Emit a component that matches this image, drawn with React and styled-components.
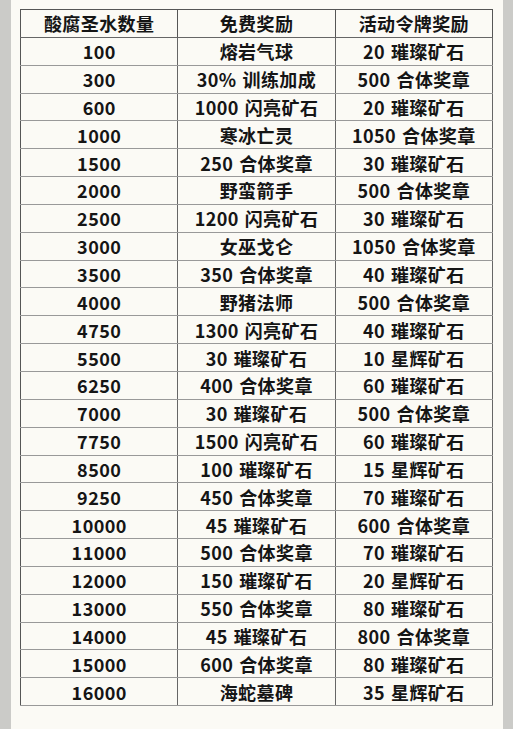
import styled, { createGlobalStyle } from "styled-components";

const GlobalStyle = createGlobalStyle`
  html, body {
    margin: 0;
    padding: 0;
    background: #cbcbc8;
  }
`;

const Sheet = styled.div`
  margin-left: 11px;
  width: 492px;
  height: 729px;
  box-sizing: border-box;
  padding: 9px 0 0 9px;
  background: #fbfaf5;
`;

const Table = styled.table`
  width: 473px;
  border-collapse: collapse;
  table-layout: fixed;
  border: 1.5px solid #555;
  font-family: "Noto Sans CJK SC", "Noto Sans", sans-serif;
  font-weight: 700;
  font-size: 18px;
  letter-spacing: 0.4px;
  word-spacing: 1.5px;
  color: #151515;
`;

const HeadCell = styled.th`
  height: 26.85px;
  padding: 0;
  font-weight: 700;
  text-align: center;
  line-height: 26px;
  border-right: 1.5px solid #555;
  border-bottom: 1.5px solid #666;
`;

const Cell = styled.td`
  height: 26.85px;
  padding: 0;
  text-align: center;
  line-height: 26px;
  white-space: nowrap;
  border-right: 1.5px solid #666;
  border-bottom: 1px solid #999;
`;

const rows = [
  ["100", "熔岩气球", "20 璀璨矿石"],
  ["300", "30% 训练加成", "500 合体奖章"],
  ["600", "1000 闪亮矿石", "20 璀璨矿石"],
  ["1000", "寒冰亡灵", "1050 合体奖章"],
  ["1500", "250 合体奖章", "30 璀璨矿石"],
  ["2000", "野蛮箭手", "500 合体奖章"],
  ["2500", "1200 闪亮矿石", "30 璀璨矿石"],
  ["3000", "女巫戈仑", "1050 合体奖章"],
  ["3500", "350 合体奖章", "40 璀璨矿石"],
  ["4000", "野猪法师", "500 合体奖章"],
  ["4750", "1300 闪亮矿石", "40 璀璨矿石"],
  ["5500", "30 璀璨矿石", "10 星辉矿石"],
  ["6250", "400 合体奖章", "60 璀璨矿石"],
  ["7000", "30 璀璨矿石", "500 合体奖章"],
  ["7750", "1500 闪亮矿石", "60 璀璨矿石"],
  ["8500", "100 璀璨矿石", "15 星辉矿石"],
  ["9250", "450 合体奖章", "70 璀璨矿石"],
  ["10000", "45 璀璨矿石", "600 合体奖章"],
  ["11000", "500 合体奖章", "70 璀璨矿石"],
  ["12000", "150 璀璨矿石", "20 星辉矿石"],
  ["13000", "550 合体奖章", "80 璀璨矿石"],
  ["14000", "45 璀璨矿石", "800 合体奖章"],
  ["15000", "600 合体奖章", "80 璀璨矿石"],
  ["16000", "海蛇墓碑", "35 星辉矿石"],
];

const App = () => {
  return (
    <>
      <GlobalStyle />
      <Sheet>
        <Table>
          <thead>
            <tr>
              <HeadCell>酸腐圣水数量</HeadCell>
              <HeadCell>免费奖励</HeadCell>
              <HeadCell>活动令牌奖励</HeadCell>
            </tr>
          </thead>
          <tbody>
            {rows.map((r) => (
              <tr key={r[0]}>
                {r.map((c, i) => (
                  <Cell key={i}>{c}</Cell>
                ))}
              </tr>
            ))}
          </tbody>
        </Table>
      </Sheet>
    </>
  );
};

export default App;
